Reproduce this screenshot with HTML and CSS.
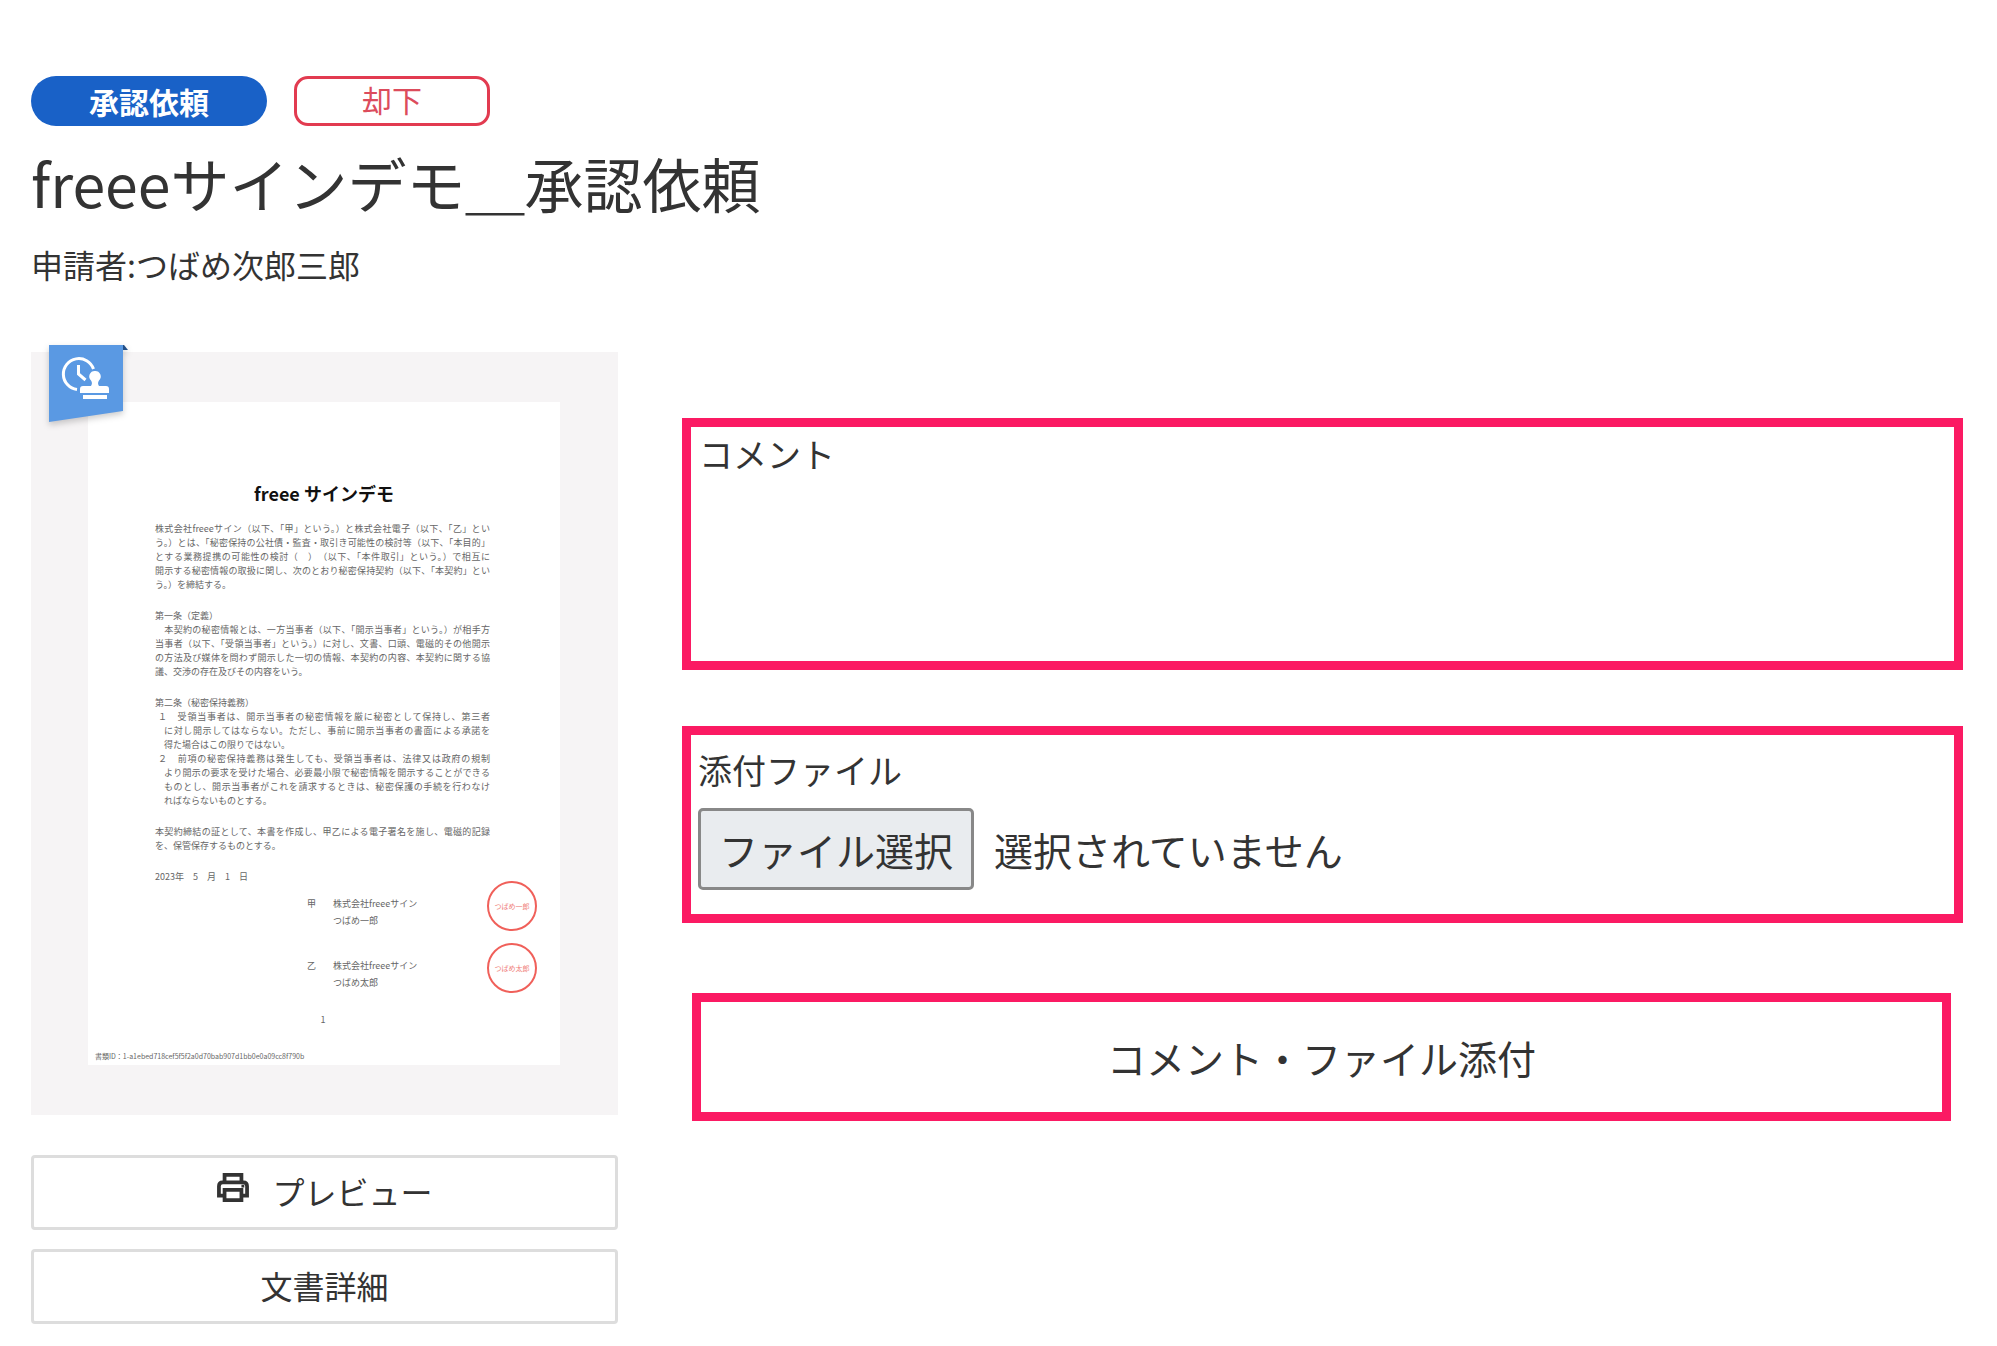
FILE: index.html
```html
<!DOCTYPE html>
<html lang="ja">
<head>
  <meta charset="UTF-8">
  <title>freeeサインデモ＿承認依頼</title>
  <link rel="stylesheet" href="styles.css">
</head>
<body>
  <header>
    <div class="badges">
      <span class="badge badge-request">承認依頼</span>
      <span class="badge badge-rejected">却下</span>
    </div>
    <h1>freeeサインデモ＿承認依頼</h1>
    <p class="applicant">申請者:つばめ次郎三郎</p>
  </header>

  <main class="content">
    <section class="document">
      <div class="thumbnail">
        <svg class="ribbon" width="84" height="84" viewBox="0 0 84 84" aria-hidden="true">
          <path d="M73 0h2l4 5h-6z" fill="#244f86"/>
          <path d="M0 0h74v66L0 77z" fill="#5a99e3"/>
          <g fill="none" stroke="#fff" stroke-width="3">
            <path d="M28 44.500A15.500 15.500 0 1 1 44.500 24"/>
            <path d="M29.500 20v9l7 6"/>
          </g>
          <g fill="#fff">
            <path d="M46 26a5.500 5.500 0 0 1 4 9.500c-1.500 2-1 4 0 5.500h7q3 0 3 3v4H31v-4q0-3 3-3h8c1-1.500 1.500-3.500 0-5.500A5.500 5.500 0 0 1 46 26z"/>
            <path d="M34 50h24v4H34z"/>
          </g>
        </svg>
        <article class="paper">
          <h2>freee サインデモ</h2>
          <div class="paper-text">
            <p>
              <span class="full">株式会社freeeサイン（以下、「甲」という。）と株式会社電子（以下、「乙」とい</span>
              <span class="full">う。）とは、「秘密保持の公社債・監査・取引き可能性の検討等（以下、「本目的」</span>
              <span class="full">とする業務提携の可能性の検討（　）　（以下、「本件取引」という。）で相互に</span>
              <span class="full">開示する秘密情報の取扱に関し、次のとおり秘密保持契約（以下、「本契約」とい</span>
              <span>う。）を締結する。</span>
            </p>
            <p>
              <span>第一条（定義）</span>
              <span class="full">　本契約の秘密情報とは、一方当事者（以下、「開示当事者」という。）が相手方</span>
              <span class="full">当事者（以下、「受領当事者」という。）に対し、文書、口頭、電磁的その他開示</span>
              <span class="full">の方法及び媒体を問わず開示した一切の情報、本契約の内容、本契約に関する協</span>
              <span>議、交渉の存在及びその内容をいう。</span>
            </p>
            <div class="clause">
              <span>第二条（秘密保持義務）</span>
              <ol>
                <li>
                  <span class="full">１　受領当事者は、開示当事者の秘密情報を厳に秘密として保持し、第三者</span>
                  <span class="full">に対し開示してはならない。ただし、事前に開示当事者の書面による承諾を</span>
                  <span>得た場合はこの限りではない。</span>
                </li>
                <li>
                  <span class="full">２　前項の秘密保持義務は発生しても、受領当事者は、法律又は政府の規制</span>
                  <span class="full">より開示の要求を受けた場合、必要最小限で秘密情報を開示することができる</span>
                  <span class="full">ものとし、開示当事者がこれを請求するときは、秘密保護の手続を行わなけ</span>
                  <span>ればならないものとする。</span>
                </li>
              </ol>
            </div>
            <p>
              <span class="full">本契約締結の証として、本書を作成し、甲乙による電子署名を施し、電磁的記録</span>
              <span>を、保管保存するものとする。</span>
            </p>
            <p>
              <span>2023年　5　月　1　日</span>
            </p>
          </div>
          <div class="signers">
            <div class="signer">
              <span>甲</span>
              <span>株式会社freeeサイン<br>つばめ一郎</span>
              <span class="stamp">つばめ一郎</span>
            </div>
            <div class="signer">
              <span>乙</span>
              <span>株式会社freeeサイン<br>つばめ太郎</span>
              <span class="stamp">つばめ太郎</span>
            </div>
          </div>
          <p class="page-number">1</p>
          <p class="doc-id">書類ID：1-a1ebed718cef5f5f2a0d70bab907d1bb0e0a09cc8f790b</p>
        </article>
      </div>
      <button type="button" class="action">
        <svg class="print-icon" width="34" height="30" viewBox="0 0 36 32" fill="none" stroke="#333" stroke-width="4" aria-hidden="true">
          <path d="M9 10V2h18v8"/>
          <path d="M8 24H3V14q0-4 4-4h22q4 0 4 4v10h-5"/>
          <path d="M9 18h18v11H9z"/>
          <path d="M27 14h3" stroke-width="3"/>
        </svg>
        プレビュー
      </button>
      <button type="button" class="action">文書詳細</button>
    </section>

    <form class="review">
      <div class="field field-comment">
        <label for="comment">コメント</label>
        <textarea id="comment"></textarea>
      </div>
      <div class="field field-file">
        <label for="attachment">添付ファイル</label>
        <div class="file-row">
          <input type="file" id="attachment" class="file-input">
          <label for="attachment" class="file-button">ファイル選択</label>
          <span class="file-name">選択されていません</span>
        </div>
      </div>
      <button type="button" class="submit">コメント・ファイル添付</button>
    </form>
  </main>
</body>
</html>
```
FILE: styles.css
```css
* {
  box-sizing: border-box;
}
body {
  margin: 0;
  padding: 76px 34px 24px 31px;
  background: #fff;
  color: #333;
  font-family: "Noto Sans CJK JP", sans-serif;
  font-size: 32px;
}
h1, h2, p, ol {
  margin: 0;
  padding: 0;
  font-weight: 400;
}
button, textarea {
  font-family: inherit;
  color: inherit;
}

/* header */
.badges {
  display: flex;
  gap: 27px;
}
.badge {
  height: 50px;
  font-size: 30px;
  text-align: center;
}
.badge-request {
  width: 236px;
  line-height: 50px;
  border-radius: 25px;
  background: #1961c7;
  color: #fff;
  font-weight: 700;
}
.badge-rejected {
  width: 196px;
  line-height: 40px;
  border: 3px solid #e23b50;
  border-radius: 14px;
  color: #dc4c5c;
}
h1 {
  margin-top: 17px;
  font-size: 59px;
  line-height: 80px;
}
.applicant {
  margin-top: 21px;
  line-height: 40px;
}

.content {
  display: flex;
  align-items: flex-start;
  gap: 64px;
  margin-top: 68px;
}

/* document column */
.document {
  flex: 0 0 587px;
  min-width: 0;
}
.thumbnail {
  position: relative;
  margin-bottom: 40px;
  padding: 50px 58px 50px 57px;
  background: #f6f4f5;
}
.ribbon {
  position: absolute;
  top: -7px;
  left: 18px;
  filter: drop-shadow(0 3px 3px rgba(0, 0, 0, 0.2));
}
.paper {
  padding: 79px 7px 2px;
  background: #fff;
  color: #666;
  font-size: 9px;
  line-height: 14px;
}
.paper h2 {
  color: #111;
  font-size: 18px;
  font-weight: 700;
  line-height: 24px;
  text-align: center;
}
.paper-text {
  display: flex;
  flex-direction: column;
  gap: 17px;
  margin: 17px 63px 0 60px;
}
.paper-text span {
  display: block;
  white-space: nowrap;
}
.paper-text .full {
  text-align-last: justify;
}
.paper-text ol {
  list-style: none;
  padding-left: 9px;
}
.paper-text li span:first-child {
  margin-left: -6px;
}
.signers {
  display: flex;
  flex-direction: column;
  gap: 12px;
  margin: -3px 0 0 212px;
}
.signer {
  display: grid;
  grid-template-columns: 26px 154px 50px;
  line-height: 17px;
}
.signer > span {
  padding-top: 14px;
}
.signer .stamp {
  height: 50px;
  padding: 0;
  border: 2px solid #f0605a;
  border-radius: 50%;
  color: #f0827c;
  font-size: 7px;
  line-height: 46px;
  text-align: center;
}
.page-number {
  margin-top: 20px;
  padding-right: 2px;
  text-align: center;
}
.doc-id {
  margin-top: 22px;
  font-size: 7px;
}
.action {
  display: flex;
  align-items: center;
  justify-content: center;
  gap: 22px;
  width: 100%;
  height: 75px;
  margin-bottom: 19px;
  padding: 0 0 4px;
  border: 3px solid #ddd;
  border-radius: 4px;
  background: #fff;
  font-size: 32px;
  cursor: pointer;
}
.print-icon {
  margin-bottom: 6px;
}

/* comment and attachment form */
.review {
  display: flex;
  flex: 1;
  flex-direction: column;
  margin-top: 66px;
  font-size: 34px;
}
.field {
  border: 9px solid #fb1a63;
}
.field label {
  display: block;
}
.field-comment {
  margin-bottom: 56px;
  padding: 7px 8px 3px;
  line-height: 40px;
}
.field-comment textarea {
  display: block;
  width: 100%;
  height: 184px;
  border: none;
  outline: none;
  resize: none;
  font-size: 34px;
}
.field-file {
  margin-bottom: 70px;
  padding: 15px 7px 24px;
  line-height: 40px;
}
.file-row {
  display: flex;
  align-items: center;
  gap: 20px;
  margin-top: 18px;
  font-size: 39px;
}
.file-input {
  position: absolute;
  width: 1px;
  height: 1px;
  opacity: 0;
}
.file-row .file-button {
  padding: 18px;
  border: 3px solid #888;
  border-radius: 5px;
  background: #e9ecef;
  cursor: pointer;
}
.submit {
  height: 128px;
  margin: 0 12px 0 10px;
  border: 9px solid #fb1a63;
  background: #fff;
  font-size: 39px;
  cursor: pointer;
}
```
